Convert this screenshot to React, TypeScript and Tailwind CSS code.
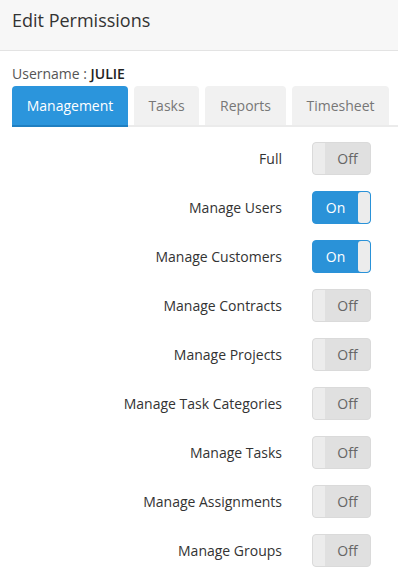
import React, { useState } from "react";

const TABS = ["Management", "Tasks", "Reports", "Timesheet"];

const PERMISSIONS = [
  { label: "Full", on: false },
  { label: "Manage Users", on: true },
  { label: "Manage Customers", on: true },
  { label: "Manage Contracts", on: false },
  { label: "Manage Projects", on: false },
  { label: "Manage Task Categories", on: false },
  { label: "Manage Tasks", on: false },
  { label: "Manage Assignments", on: false },
  { label: "Manage Groups", on: false },
];

function Toggle({ on, onClick }: { on: boolean; onClick: () => void }) {
  if (on) {
    return (
      <button
        onClick={onClick}
        className="flex h-[33px] w-[59px] overflow-hidden rounded-[4px] border border-[#2a92d8] bg-[#2a92d8]"
      >
        <span className="flex flex-1 items-center justify-center text-[14px] text-white">On</span>
        <span className="h-full w-[12px] rounded-[3px] bg-[#ececec]" />
      </button>
    );
  }
  return (
    <button
      onClick={onClick}
      className="flex h-[33px] w-[59px] overflow-hidden rounded-[4px] border border-[#dadada] bg-[#e0e0e0]"
    >
      <span className="h-full w-[12px] rounded-l-[3px] bg-[#ececec]" />
      <span className="flex flex-1 items-center justify-center text-[14px] text-[#666]">Off</span>
    </button>
  );
}

export default function App() {
  const [tab, setTab] = useState(0);
  const [perms, setPerms] = useState(PERMISSIONS);

  const flip = (i: number) =>
    setPerms((prev) => prev.map((p, j) => (j === i ? { ...p, on: !p.on } : p)));

  return (
    <div className="h-[577px] w-[398px] overflow-hidden bg-white text-[#333]" style={{ fontFamily: "'Open Sans', sans-serif" }}>
      {/* Header */}
      <div className="h-[51px] border-b border-[#e3e3e3] bg-[#f7f7f7] px-3 pt-[7px]">
        <h1 className="text-[18px] leading-[27px] text-[#333]">Edit Permissions</h1>
      </div>

      {/* Body */}
      <div className="pl-3 pt-[12px]">
        <div className="text-[14px] leading-[22px] text-[#555]">
          Username : <span className="font-semibold text-[#222]">JULIE</span>
        </div>

        {/* Tabs */}
        <div className="mt-[1px] flex gap-[6px] border-b-2 border-[#ebebeb]">
          {TABS.map((t, i) => (
            <button
              key={t}
              onClick={() => setTab(i)}
              className={`-mb-[2px] h-[41px] rounded-t-[4px] text-[14px] ${
                tab === i
                  ? "border-b-2 border-[#1f7fc1] bg-[#2b95dc] text-white"
                  : "border-b-2 border-[#ebebeb] bg-[#f1f1f1] text-[#777]"
              } ${i === 0 ? "w-[116px]" : i === 1 ? "w-[65px]" : i === 2 ? "w-[81px]" : "w-[97px]"}`}
            >
              {t}
            </button>
          ))}
        </div>

        {/* Permission rows */}
        <div className="flex flex-col gap-[16px] pr-[27px] pt-[15px]">
          {perms.map((p, i) => (
            <div key={p.label} className="flex items-center">
              <span className="flex-1 pr-[30px] text-right text-[14px] text-[#333]">{p.label}</span>
              <Toggle on={p.on} onClick={() => flip(i)} />
            </div>
          ))}
        </div>
      </div>
    </div>
  );
}
